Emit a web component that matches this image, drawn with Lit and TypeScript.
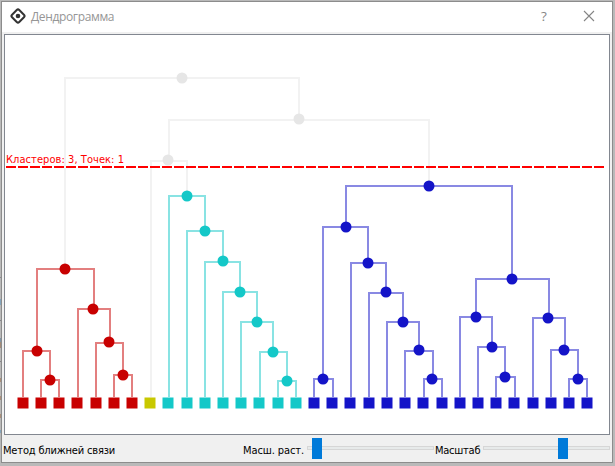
import { LitElement, html, svg, css } from "lit";
import { customElement, property } from "lit/decorators.js";

type Tone = "cut" | "red" | "yellow" | "teal" | "blue";

interface Join {
  tone: Tone;
  cx: number;
  cy: number;
  barY: number;
  left: [number, number];
  right: [number, number];
}

const LEAF_Y = 403;
const L = LEAF_Y - 6;

const join = (
  tone: Tone, cx: number, cy: number, barY: number,
  lx: number, ly: number, rx: number, ry: number
): Join => ({ tone, cx, cy, barY, left: [lx, ly], right: [rx, ry] });

const JOINS: Join[] = [
  join("cut", 182, 78, 78, 65, 264, 299, 115),
  join("cut", 299, 119, 120, 169, 156, 429, 181),
  join("cut", 168, 160, 161, 151, L, 187, 191),
  join("red", 65, 269, 269, 37, 346, 94, 305),
  join("red", 37, 351, 351, 23, L, 50, 375),
  join("red", 50, 380, 380, 41, L, 59, L),
  join("red", 93, 309, 309, 78, L, 110, 338),
  join("red", 109, 342, 343, 96, L, 123, 370),
  join("red", 123, 375, 375, 114, L, 132, L),
  join("teal", 187, 196, 196, 169, L, 205, 226),
  join("teal", 205, 231, 231, 187, L, 223, 256),
  join("teal", 223, 261, 262, 205, L, 240, 287),
  join("teal", 240, 292, 292, 223, L, 257, 317),
  join("teal", 257, 322, 322, 241, L, 273, 347),
  join("teal", 273, 352, 352, 260, L, 287, 376),
  join("teal", 287, 381, 381, 278, L, 296, L),
  join("blue", 429, 186, 186, 346, 222, 512, 274),
  join("blue", 346, 227, 227, 323, 374, 368, 258),
  join("blue", 323, 379, 379, 314, L, 333, L),
  join("blue", 368, 263, 263, 351, L, 386, 287),
  join("blue", 386, 292, 293, 369, L, 403, 317),
  join("blue", 403, 322, 322, 387, L, 419, 345),
  join("blue", 419, 350, 351, 405, L, 433, 374),
  join("blue", 432, 379, 379, 424, L, 442, L),
  join("blue", 512, 279, 279, 476, 312, 549, 313),
  join("blue", 476, 317, 317, 460, L, 492, 342),
  join("blue", 492, 347, 347, 478, L, 505, 372),
  join("blue", 505, 377, 377, 496, L, 515, L),
  join("blue", 548, 318, 318, 533, L, 565, 345),
  join("blue", 564, 350, 350, 551, L, 578, 374),
  join("blue", 578, 379, 379, 569, L, 587, L),
];

const LEAVES: [Tone, number[]][] = [
  ["red", [23, 41, 59, 77, 96, 114, 132]],
  ["yellow", [150]],
  ["teal", [168, 187, 205, 223, 241, 259, 278, 296]],
  ["blue", [314, 332, 350, 369, 387, 405, 423, 442, 460, 478, 496, 514, 533, 551, 569, 587]],
];

@customElement("title-bar")
export class TitleBar extends LitElement {
  static styles = css`
    :host {
      display: flex;
      align-items: center;
      height: 30px;
      flex: none;
      background: #fff;
      color: #969696;
      font: 12px/16px "Open Sans", "Noto Sans", sans-serif;
    }
    .logo { width: 16px; height: 16px; margin: 0 0 2px 8px; flex: none; }
    .name { flex: 1; margin-left: 5px; letter-spacing: -0.36px; }
    .help { width: 10px; margin-bottom: 2px; text-align: center; font-size: 13.5px; color: #868686; }
    .close { width: 12px; height: 12px; margin: 0 17px 2px 34px; }
  `;
  render() {
    return html`
      <svg class="logo" viewBox="0 0 16 16">
        <rect x="2.9" y="2.9" width="10.2" height="10.2" rx="1.8" transform="rotate(45 8 8)"
          fill="none" stroke="#333" stroke-width="2" />
        <circle cx="8" cy="8" r="2.3" fill="#333" />
      </svg>
      <span class="name">Дендрограмма</span>
      <span class="help">?</span>
      <svg class="close" viewBox="0 0 12 12">
        <path d="M1 1L11 11M11 1L1 11" stroke="#858585" stroke-width="1.1" />
      </svg>
    `;
  }
}

@customElement("dendrogram-view")
export class DendrogramView extends LitElement {
  static styles = css`
    :host { display: block; background: #fff; border: 1px solid #828790; box-sizing: border-box; }
    .tree { display: block; width: 604px; height: 399px; }
    .link { fill: none; stroke: var(--tone); stroke-width: 2; stroke-opacity: 0.5; }
    .node { fill: var(--tone); }
    .cut { --tone: #e6e6e6; }
    .red { --tone: #c80000; }
    .yellow { --tone: #c8c800; }
    .teal { --tone: #14c8c8; }
    .blue { --tone: #1414c8; }
    .threshold { stroke: #f00; stroke-width: 2; stroke-dasharray: 10 2; }
    .caption { fill: #f00; font: 11px "DejaVu Sans Condensed", "DejaVu Sans", sans-serif; font-stretch: condensed; }
  `;
  render() {
    return html`
      <svg class="tree" viewBox="5 35 604 399">
        ${JOINS.map((j) => svg`
          <g class=${j.tone}>
            <path class="link" d="M${j.left[0]} ${j.left[1]}V${j.barY}H${j.right[0]}V${j.right[1]}" />
            <circle class="node" cx=${j.cx} cy=${j.cy} r="5.5" />
          </g>`)}
        ${LEAVES.map(([tone, xs]) => svg`
          <g class=${tone}>
            ${xs.map((x) => svg`<rect class="node" x=${x - 5.5} y=${LEAF_Y - 5.5} width="11" height="11" />`)}
          </g>`)}
        <line class="threshold" x1="6" y1="167" x2="604" y2="167" />
        <text class="caption" x="6" y="163" textLength="118">Кластеров: 3, Точек: 1</text>
      </svg>
    `;
  }
}

@customElement("scale-slider")
export class ScaleSlider extends LitElement {
  @property({ type: Number }) value = 0;
  static styles = css`
    :host { display: grid; align-items: start; width: 127px; height: 21px; flex: none; }
    .groove, .handle { grid-area: 1 / 1; }
    .groove { height: 4px; margin-top: 8px; box-sizing: border-box; border: 1px solid #d6d6d6; background: #e7eaea; }
    .handle { width: 10px; height: 21px; background: #007ad9; }
  `;
  render() {
    return html`
      <div class="groove"></div>
      <div class="handle" style="margin-left:${this.value}px"></div>
    `;
  }
}

@customElement("app-root")
export class AppRoot extends LitElement {
  static styles = css`
    :host {
      display: block;
      box-sizing: border-box;
      width: 615px;
      height: 466px;
      padding: 1px 2px 3px 1px;
      background:
        linear-gradient(
          transparent 277px, #8a8a90 277px 278px,
          transparent 278px 299px, #83a5bd 299px 305px,
          transparent 305px 320px, #85858a 320px 321px,
          transparent 321px 338px, #7f95a8 338px 342px, #a38b78 342px 348px,
          transparent 348px 361px, #85858a 361px 362px,
          transparent 362px 378px, #a98f7a 378px 382px,
          transparent 382px 396px, #a98f7a 396px 400px,
          transparent 400px 414px, #a98f7a 414px 418px,
          transparent 418px 430px, #83a5bd 430px 433px, transparent 433px
        ) 0 0 / 1px 100% no-repeat,
        #b9b9b9;
      overflow: hidden;
    }
    .window {
      display: flex;
      flex-direction: column;
      box-sizing: border-box;
      height: 462px;
      border: 1px solid #8c8c8c;
      background: #f0f0f0;
    }
    .view { margin: 2px 2px 0; height: 401px; flex: none; }
    .controls {
      display: flex;
      align-items: flex-start;
      flex: 1;
      padding: 3px 0 0 1px;
      color: #000;
      font: 11px/14px "DejaVu Sans Condensed", "DejaVu Sans", sans-serif;
      font-stretch: condensed;
      white-space: nowrap;
    }
    .label { padding-top: 6px; flex: none; }
    .method { width: 240px; letter-spacing: -0.17px; }
    .spread { width: 64px; letter-spacing: -0.1px; }
    .scale { width: 48px; margin-left: 1px; letter-spacing: -0.25px; }
  `;
  render() {
    return html`
      <div class="window">
        <title-bar></title-bar>
        <dendrogram-view class="view"></dendrogram-view>
        <div class="controls">
          <span class="label method">Метод ближней связи</span>
          <span class="label spread">Масш. раст.</span>
          <scale-slider .value=${5}></scale-slider>
          <span class="label scale">Масштаб</span>
          <scale-slider .value=${75}></scale-slider>
        </div>
      </div>
    `;
  }
}
